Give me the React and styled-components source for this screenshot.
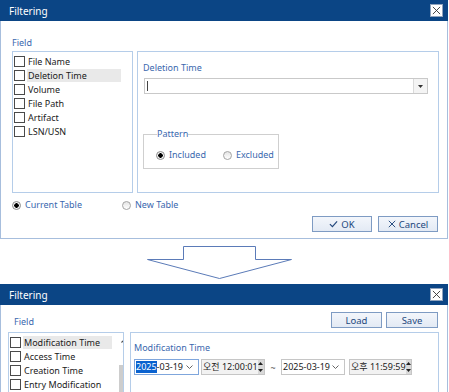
import React from "react";
import styled, { createGlobalStyle } from "styled-components";

const GlobalStyle = createGlobalStyle`
  html, body { margin: 0; padding: 0; background: #fff; }
  body {
    width: 449px; height: 392px; overflow: hidden;
    font-family: "Noto Sans", "Noto Sans CJK KR", sans-serif;
    font-size: 9px; color: #1b1b1b;
  }
`;

const Page = styled.div`
  display: flex;
  flex-direction: column;
  width: 449px;
  height: 392px;
  overflow: hidden;
`;

const Dialog = styled.div`
  width: 448px;
  flex-shrink: 0;
  display: flex;
  flex-direction: column;
  background: #fff;
`;

const TitleBar = styled.div`
  height: 21px;
  flex-shrink: 0;
  background: #0b4585;
  color: #fff;
  font-size: 10px;
  display: flex;
  align-items: center;
  justify-content: space-between;
  padding: 0 5px 0 9px;
`;

const CloseBox = styled.div`
  width: 11px;
  height: 11px;
  background: #fff;
  border: 1px solid #8fa3bd;
  display: flex;
  align-items: center;
  justify-content: center;
`;

const Body = styled.div`
  border: 1px solid #a7bedd;
  border-top: none;
  padding: ${(p) => p.$pad};
  display: flex;
  flex-direction: column;
  height: ${(p) => (p.$h ? `${p.$h}px` : "auto")};
  box-sizing: border-box;
`;

const Label = styled.div`
  color: #3a68ae;
  line-height: 12px;
  margin-left: ${(p) => p.$ml || 0}px;
`;

const TopRow = styled.div`
  display: flex;
  align-items: flex-end;
  justify-content: space-between;
  margin-right: 1px;
`;

const Columns = styled.div`
  display: flex;
  gap: ${(p) => p.$gap}px;
  margin-top: ${(p) => p.$mt}px;
  height: ${(p) => (p.$h ? `${p.$h}px` : "auto")};
`;

const ListBox = styled.div`
  width: ${(p) => p.$w}px;
  flex-shrink: 0;
  border: 1px solid #b5cde9;
  box-sizing: border-box;
  display: flex;
  padding: 2px 0 0 1px;
  overflow: hidden;
`;

const Items = styled.div`
  flex: 1;
  display: flex;
  flex-direction: column;
`;

const Item = styled.div`
  display: flex;
  align-items: center;
  height: 14px;
  flex-shrink: 0;
  gap: 2px;
`;

const Check = styled.span`
  width: 9px;
  height: 9px;
  border: 1px solid #4a4a4a;
  background: #fff;
  flex-shrink: 0;
`;

const ItemText = styled.span`
  width: ${(p) => (p.$hl ? `${p.$hl}px` : "auto")};
  background: ${(p) => (p.$hl ? "#e9e9e9" : "transparent")};
  line-height: 13px;
  padding-left: 1px;
  white-space: nowrap;
  color: #1b1b1b;
`;

const ScrollBar = styled.div`
  width: 11px;
  flex-shrink: 0;
  display: flex;
  flex-direction: column;
  align-items: center;
  margin-top: -1px;
`;

const ScrollArrow = styled.div`
  height: 14px;
  display: flex;
  align-items: center;
`;

const Thumb = styled.div`
  width: 10px;
  margin-top: 17px;
  flex: 1;
  background: #cdcdcd;
`;

const Panel = styled.div`
  flex: 1;
  border: 1px solid #b5cde9;
  box-sizing: border-box;
  padding: ${(p) => p.$pad};
  display: flex;
  flex-direction: column;
  margin-right: ${(p) => p.$mr}px;
`;

const Combo = styled.div`
  margin-top: 4px;
  height: 16px;
  width: 284px;
  border: 1px solid #c9c9c9;
  box-sizing: border-box;
  display: flex;
  align-items: stretch;
  margin-left: 1px;
`;

const Caret = styled.div`
  width: 1px;
  height: 10px;
  background: #444;
  align-self: center;
  margin-left: 2px;
`;

const ComboButton = styled.div`
  margin-left: auto;
  width: 13px;
  border-left: 1px solid #dadada;
  background: #f4f4f4;
  display: flex;
  align-items: center;
  justify-content: center;
`;

const Group = styled.fieldset`
  margin: 35px 0 0 0;
  width: 136px;
  height: 40px;
  box-sizing: border-box;
  border: 1px solid #cfcfcf;
  padding: 10px 0 0 12px;
  display: flex;
  align-items: flex-start;
  gap: 17px;
  legend {
    color: #3a68ae;
    padding: 0;
    margin-left: 1px;
    line-height: 10px;
  }
`;

const RadioRow = styled.div`
  display: flex;
  align-items: center;
  margin: ${(p) => p.$m};
`;

const Radio = styled.label`
  display: flex;
  align-items: center;
  gap: 4px;
  color: #3a68ae;
  line-height: 12px;
  width: ${(p) => (p.$w ? `${p.$w}px` : "auto")};
`;

const Dot = styled.span`
  width: 7px;
  height: 7px;
  border-radius: 50%;
  border: 1px solid ${(p) => (p.$on ? "#8b8b8b" : "#a3a3a3")};
  background: ${(p) =>
    p.$on ? "radial-gradient(circle, #000 0 2px, #f4f4f4 2.5px)" : "linear-gradient(#e4e4e4, #fff)"};
  flex-shrink: 0;
`;

const ButtonRow = styled.div`
  display: flex;
  justify-content: flex-end;
  gap: ${(p) => p.$gap}px;
  margin-top: ${(p) => p.$mt}px;
  margin-right: ${(p) => p.$mr}px;
`;

const Button = styled.div`
  width: ${(p) => p.$w}px;
  height: 16px;
  box-sizing: border-box;
  border: 1px solid #7e9bc3;
  background: linear-gradient(#f3f6fb, #e3eaf4);
  color: #23487d;
  font-size: 9.5px;
  display: flex;
  align-items: center;
  justify-content: center;
  gap: 3px;
`;

const DateRow = styled.div`
  display: flex;
  align-items: center;
  margin-top: 5px;
  height: 16px;
`;

const Field = styled.div`
  width: ${(p) => p.$w}px;
  height: 16px;
  box-sizing: border-box;
  border: 1px solid ${(p) => (p.$focus ? "#7fa6dc" : "#c6c6c6")};
  background: ${(p) => (p.$gray ? "#f2f2f2" : "#fff")};
  display: flex;
  align-items: center;
  padding-left: 1px;
  margin-left: ${(p) => p.$ml}px;
  white-space: nowrap;
  line-height: 12px;
`;

const Sel = styled.span`
  background: #0a62cf;
  color: #fff;
`;

const Chevron = styled.span`
  margin-left: auto;
  margin-right: 5px;
  display: flex;
`;

const Spin = styled.div`
  margin-left: auto;
  width: 9px;
  height: 14px;
  background: #d9d9d9;
  display: flex;
  flex-direction: column;
  align-items: center;
  justify-content: space-around;
`;

const Tilde = styled.span`
  margin-left: 3px;
  width: 10px;
  text-align: center;
  color: #555;
`;

const XIcon = ({ s = 9, c = "#222", w = 1.2 }) => (
  <svg width={s} height={s} viewBox="0 0 10 10">
    <path d="M1 1L9 9M9 1L1 9" stroke={c} strokeWidth={w} fill="none" />
  </svg>
);

const CheckIcon = () => (
  <svg width="9" height="8" viewBox="0 0 10 8">
    <path d="M1 4.2L3.8 7L9 1" stroke="#23487d" strokeWidth="1.3" fill="none" />
  </svg>
);

const TriDown = ({ c = "#333" }) => (
  <svg width="5" height="3" viewBox="0 0 5 3">
    <path d="M0 0H5L2.5 3Z" fill={c} />
  </svg>
);

const TriUp = ({ c = "#222" }) => (
  <svg width="5" height="3" viewBox="0 0 5 3">
    <path d="M0 3H5L2.5 0Z" fill={c} />
  </svg>
);

const ChevDown = () => (
  <svg width="7" height="4" viewBox="0 0 7 4">
    <path d="M0.5 0.5L3.5 3.5L6.5 0.5" stroke="#666" fill="none" />
  </svg>
);

const ChevUp = () => (
  <svg width="7" height="4" viewBox="0 0 7 4">
    <path d="M0.5 3.5L3.5 0.5L6.5 3.5" stroke="#444" strokeWidth="1.1" fill="none" />
  </svg>
);

const Arrow = () => (
  <svg width="449" height="45" viewBox="0 0 449 45" style={{ display: "block", flexShrink: 0 }}>
    <polygon
      points="183.5,7.5 255.5,7.5 255.5,20.5 291.5,20.5 219.5,39.5 147.5,20.5 183.5,20.5"
      fill="#fff"
      stroke="#5b7bb8"
      strokeWidth="1"
    />
  </svg>
);

const fields1 = ["File Name", "Deletion Time", "Volume", "File Path", "Artifact", "LSN/USN"];
const fields2 = ["Modification Time", "Access Time", "Creation Time", "Entry Modification", "Mismatch Sig Deletion"];

export default function App() {
  return (
    <Page>
      <GlobalStyle />
      <Dialog>
        <TitleBar>
          <span>Filtering</span>
          <CloseBox>
            <XIcon s={9} c="#333" w={1} />
          </CloseBox>
        </TitleBar>
        <Body $h={218} $pad="16px 0 0 11px">
          <Label>Field</Label>
          <Columns $gap={4} $mt={2} $h={142}>
            <ListBox $w={121}>
              <Items>
                {fields1.map((f) => (
                  <Item key={f}>
                    <Check />
                    <ItemText $hl={f === "Deletion Time" ? 93 : 0}>{f}</ItemText>
                  </Item>
                ))}
              </Items>
            </ListBox>
            <Panel $pad="10px 0 0 5px" $mr={8}>
              <Label>Deletion Time</Label>
              <Combo>
                <Caret />
                <ComboButton>
                  <TriDown />
                </ComboButton>
              </Combo>
              <Group>
                <legend>Pattern</legend>
                <Radio>
                  <Dot $on />
                  Included
                </Radio>
                <Radio>
                  <Dot />
                  Excluded
                </Radio>
              </Group>
            </Panel>
          </Columns>
          <RadioRow $m="6px 0 0 0">
            <Radio $w={110}>
              <Dot $on />
              Current Table
            </Radio>
            <Radio>
              <Dot />
              New Table
            </Radio>
          </RadioRow>
          <ButtonRow $gap={6} $mt={5} $mr={9}>
            <Button $w={60}>
              <CheckIcon />
              OK
            </Button>
            <Button $w={60}>
              <XIcon s={8} c="#23487d" w={1.2} />
              Cancel
            </Button>
          </ButtonRow>
        </Body>
      </Dialog>
      <Arrow />
      <Dialog>
        <TitleBar>
          <span>Filtering</span>
          <CloseBox>
            <XIcon s={9} c="#333" w={1} />
          </CloseBox>
        </TitleBar>
        <Body $pad="7px 0 0 7px">
          <TopRow>
            <Label $ml={6}>Field</Label>
            <ButtonRow $gap={4} $mt={0} $mr={8}>
              <Button $w={51}>Load</Button>
              <Button $w={52}>Save</Button>
            </ButtonRow>
          </TopRow>
          <Columns $gap={6} $mt={4} $h={80}>
            <ListBox $w={116}>
              <Items>
                {fields2.map((f) => (
                  <Item key={f}>
                    <Check />
                    <ItemText $hl={f === "Modification Time" ? 88 : 0}>{f}</ItemText>
                  </Item>
                ))}
              </Items>
              <ScrollBar>
                <ScrollArrow>
                  <ChevUp />
                </ScrollArrow>
                <Thumb />
              </ScrollBar>
            </ListBox>
            <Panel $pad="9px 0 0 3px" $mr={8}>
              <Label>Modification Time</Label>
              <DateRow>
                <Field $w={65} $ml={0} $focus>
                  <Sel>2025</Sel>-03-19
                  <Chevron>
                    <ChevDown />
                  </Chevron>
                </Field>
                <Field $w={64} $ml={2} $gray>
                  오전 12:00:01
                  <Spin>
                    <TriUp />
                    <TriDown c="#222" />
                  </Spin>
                </Field>
                <Tilde>~</Tilde>
                <Field $w={64} $ml={3}>
                  2025-03-19
                  <Chevron>
                    <ChevDown />
                  </Chevron>
                </Field>
                <Field $w={63} $ml={4} $gray>
                  오후 11:59:59
                  <Spin>
                    <TriUp />
                    <TriDown c="#222" />
                  </Spin>
                </Field>
              </DateRow>
            </Panel>
          </Columns>
        </Body>
      </Dialog>
    </Page>
  );
}
